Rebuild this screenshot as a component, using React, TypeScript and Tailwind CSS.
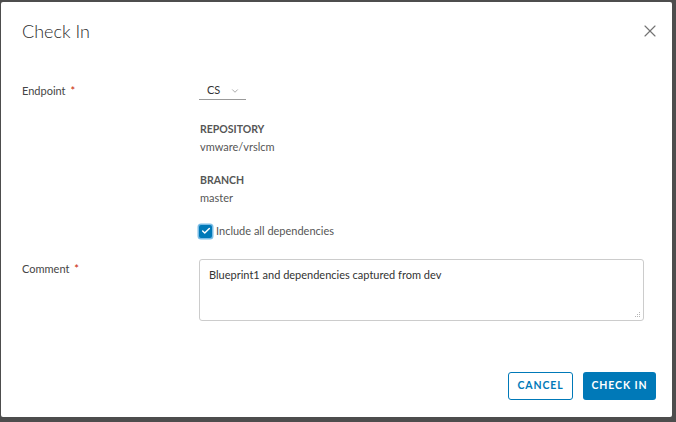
import { X, ChevronDown, Check } from "lucide-react";

const font = { fontFamily: "Lato, 'Open Sans', sans-serif" };

function Grip() {
  return (
    <svg width="7" height="7" viewBox="0 0 7 7" className="absolute right-[3px] bottom-[3px]">
      <g fill="#b5b5b5">
        <rect x="5" y="1" width="1" height="1" />
        <rect x="3" y="3" width="1" height="1" />
        <rect x="5" y="3" width="1" height="1" />
        <rect x="1" y="5" width="1" height="1" />
        <rect x="3" y="5" width="1" height="1" />
        <rect x="5" y="5" width="1" height="1" />
      </g>
    </svg>
  );
}

export default function App() {
  return (
    <div className="w-[676px] h-[422px] bg-[#4d4d4d] pt-[2px] pl-[1px]" style={font}>
      <div className="w-[671px] h-[415px] bg-white rounded-[2px] flex flex-col text-[#333]">
        <header className="flex items-center justify-between pt-[17px] pl-[21px] pr-[12px]">
          <h1 className="text-[18px] leading-[24px] font-light text-[#2b2b2b]">Check In</h1>
          <X className="w-[20px] h-[20px] text-[#747474]" strokeWidth={1.4} />
        </header>

        <div className="pl-[21px] pr-[28px] mt-[39px] grid grid-cols-[177px_1fr]">
          <div className="text-[11px] leading-[18px] text-[#454545]">
            Endpoint <span className="text-[#c92100] ml-[2px]">*</span>
          </div>
          <div className="flex">
            <div className="flex items-center h-[18px] w-[47px] border-b border-[#9a9a9a] pl-[8px] gap-[10px] text-[11px]">
              <span>CS</span>
              <ChevronDown className="w-[10px] h-[10px] text-[#9a9a9a]" />
            </div>
          </div>

          <div />
          <div className="mt-[21px] pl-[1px]">
            <div className="text-[10.5px] leading-[16px] font-bold text-[#565656]">REPOSITORY</div>
            <div className="mt-[2px] text-[11px] leading-[16px] text-[#565656]">vmware/vrslcm</div>
            <div className="mt-[17px] text-[10.5px] leading-[16px] font-bold text-[#565656]">BRANCH</div>
            <div className="mt-[2px] text-[11px] leading-[16px] text-[#565656]">master</div>
            <label className="mt-[17px] -ml-[1px] flex items-center gap-[4px] h-[16px] text-[11px] text-[#565656]">
              <span className="w-[13px] h-[13px] rounded-[2px] bg-[#0079b8] flex items-center justify-center shadow-[0_0_0_1.5px_#7cbde6]">
                <Check className="w-[10px] h-[10px] text-white" strokeWidth={3.5} />
              </span>
              Include all dependencies
            </label>
          </div>

          <div className="mt-[20px] pt-[2px] text-[11px] leading-[16px] text-[#454545]">
            Comment <span className="text-[#c92100] ml-[2px]">*</span>
          </div>
          <div className="mt-[20px] relative">
            <textarea
              className="block w-full h-[62px] border border-[#ccc] rounded-[3px] px-[9px] py-[7px] text-[11px] leading-[16px] text-[#333] outline-none resize-none"
              style={font}
              defaultValue="Blueprint1 and dependencies captured from dev"
            />
            <Grip />
          </div>
        </div>

        <div className="mt-[51px] flex justify-end gap-[10px] pr-[16px]">
          <button className="h-[28px] w-[65px] border border-[#0079b8] rounded-[3px] text-[#0079b8] text-[10.5px] font-bold tracking-[0.9px]">
            CANCEL
          </button>
          <button className="h-[28px] w-[73px] bg-[#0079b8] rounded-[3px] text-white text-[10.5px] font-bold tracking-[0.9px]">
            CHECK IN
          </button>
        </div>
      </div>
    </div>
  );
}
